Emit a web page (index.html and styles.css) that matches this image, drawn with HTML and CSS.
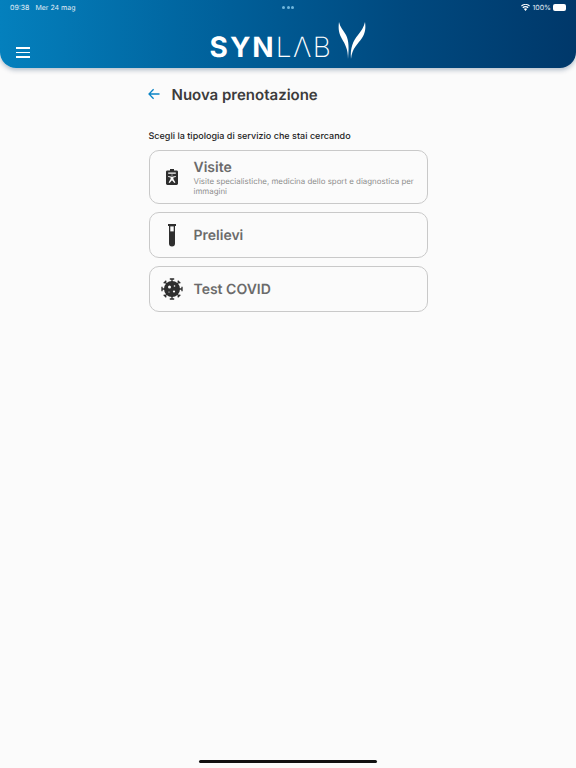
FILE: index.html
```html
<!DOCTYPE html>
<html lang="it">
<head>
  <meta charset="UTF-8" />
  <meta name="viewport" content="width=device-width, initial-scale=1.0"/>
  <title>Nuova prenotazione</title>
  <link rel="stylesheet" href="styles.css">
</head>
<body>
  <header class="topbar">
    <div class="status">
      <div class="status-left"><span>09:38</span><span>Mer 24 mag</span></div>
      <div class="status-dots"><i></i><i></i><i></i></div>
      <div class="status-right">
        <svg class="wifi" viewBox="0 0 12 9" width="9" height="7">
          <path d="M6 9 3.900 6.500a3 3 0 0 1 4.200 0zM3.100 5.600 1.800 4.100a6 6 0 0 1 8.400 0L8.900 5.600a4.200 4.200 0 0 0-5.800 0zM1 3.200 0 2a9 9 0 0 1 12 0l-1 1.200a7.500 7.500 0 0 0-10 0z" fill="#fff"/>
        </svg>
        <span>100%</span>
        <span class="battery"></span>
      </div>
    </div>
    <div class="brand-row">
      <button class="menu" aria-label="Menu"><i></i><i></i><i></i></button>
      <div class="logo">
        <span class="logo-syn">SYN</span><span class="logo-lab">LΛB</span>
        <svg class="horns" viewBox="0 0 28 37" width="28" height="37">
          <path d="M1 0C0 7 1 12 4 17c3 5 6 10 6 20C11 26 11 19 8 13 5 8 2 5 1 0z" fill="#fff"/>
          <path d="M27 0c1 7 0 11-3 16-4 6-10 10-11 21-1-11 2-18 7-24 3-4 6-8 7-13z" fill="#fff"/>
        </svg>
      </div>
    </div>
  </header>

  <main class="content">
    <div class="title-row">
      <svg class="back" viewBox="0 0 12 12" width="12" height="12">
        <path d="M11.500 6H1M5.600 1.200 1 6l4.600 4.800" fill="none" stroke="#0a84c6" stroke-width="1.300"/>
      </svg>
      <h1>Nuova prenotazione</h1>
    </div>

    <p class="lead">Scegli la tipologia di servizio che stai cercando</p>

    <div class="cards">
      <a class="card card-tall">
        <span class="card-icon">
          <svg viewBox="0 0 12 16" width="12" height="16">
            <path fill-rule="evenodd" fill="#2e2e2e" d="M4 0h4v1.400h2.600c.8 0 1.400.6 1.400 1.400v11.800c0 .8-.6 1.400-1.400 1.400H1.400c-.8 0-1.400-.6-1.400-1.400V2.800c0-.8.6-1.400 1.400-1.400H4zM2.200 3.600v1.200h7.600V3.600zM5 5.800a1.100 1.100 0 0 0 2 0zM2.200 6.900v1l2.400.7v1.500l-2 3.400 1 .5L6 11.200l2.400 2.800 1-.5-2-3.400V8.600l2.400-.7v-1L6 7.700z"/>
          </svg>
        </span>
        <span class="card-text">
          <span class="card-title">Visite</span>
          <span class="card-desc">Visite specialistiche, medicina dello sport e diagnostica per immagini</span>
        </span>
      </a>
      <a class="card">
        <span class="card-icon">
          <svg viewBox="0 0 8 23" width="8" height="23">
            <path fill="#2e2e2e" d="M0 0h8v2H7v17.500a3 3 0 0 1-6 0V2H0z"/>
            <rect x="2.300" y="2.400" width="3.400" height="5" fill="#fbfbfb"/>
          </svg>
        </span>
        <span class="card-text"><span class="card-title">Prelievi</span></span>
      </a>
      <a class="card">
        <span class="card-icon">
          <svg viewBox="0 0 22 22" width="22" height="22">
            <circle cx="11" cy="11" r="8" fill="#2e2e2e"/>
            <g stroke="#2e2e2e" stroke-width="1.300">
              <path d="M11 1V4M8.800 1h4.400"/>
              <path d="M11 18v3M8.800 21h4.400"/>
              <path d="M1 11H4M1 8.800v4.400"/>
              <path d="M18 11h3M21 8.800v4.400"/>
              <path d="M4 4l2.200 2.200M2.700 5.300l2.600-2.600"/>
              <path d="M18 4l-2.200 2.200M19.300 5.300l-2.600-2.600"/>
              <path d="M4 18l2.200-2.200M2.700 16.700l2.600 2.600"/>
              <path d="M18 18l-2.200-2.200M19.300 16.700l-2.600 2.600"/>
            </g>
            <circle cx="8.500" cy="9" r="1.500" fill="#fbfbfb"/>
            <circle cx="13.500" cy="8" r=".8" fill="#fbfbfb"/>
            <circle cx="13" cy="13.500" r="1.100" fill="#fbfbfb"/>
            <circle cx="8" cy="14" r=".6" fill="#fbfbfb"/>
          </svg>
        </span>
        <span class="card-text"><span class="card-title">Test COVID</span></span>
      </a>
    </div>
  </main>

  <div class="home-bar"></div>
</body>
</html>
```

FILE: styles.css
```css
* {
  box-sizing: border-box;
}

html, body {
  height: 100%;
}

body {
  display: flex;
  flex-direction: column;
  margin: 0;
  background: #fbfbfb;
  font-family: Inter, 'Noto Sans', sans-serif;
  text-rendering: geometricPrecision;
  color: #2e2e2e;
  overflow: hidden;
}

.topbar {
  height: 68px;
  flex: none;
  padding: 0 10px;
  color: #fff;
  background: linear-gradient(90deg, #0480bd 0%, #005f99 40%, #00497f 70%, #00386a 100%);
  border-radius: 0 0 16px 16px;
  box-shadow: 0 2px 5px rgba(0, 40, 80, 0.3);
}

.status {
  display: grid;
  grid-template-columns: 1fr auto 1fr;
  align-items: center;
  height: 14px;
  font-size: 7px;
  color: #e2eef6;
}

.status-left {
  display: flex;
  gap: 6px;
}

.status-dots {
  display: flex;
  gap: 1.500px;
}

.status-dots i {
  width: 3px;
  height: 3px;
  border-radius: 50%;
  background: #6fb6dc;
}

.status-right {
  display: flex;
  justify-content: flex-end;
  align-items: center;
  gap: 2px;
}

.battery {
  display: block;
  width: 13px;
  height: 7px;
  border-radius: 2px;
  background: #fff;
}

.brand-row {
  position: relative;
  display: flex;
  justify-content: center;
  height: 54px;
}

.menu {
  position: absolute;
  left: 6px;
  top: 33px;
  display: flex;
  flex-direction: column;
  gap: 3px;
  width: 14px;
  padding: 0;
  border: none;
  background: none;
}

.menu i {
  display: block;
  height: 1.500px;
  width: 14px;
  background: #fff;
}

.logo {
  display: flex;
  align-items: flex-end;
  height: 45px;
  color: #fff;
  line-height: 24px;
}

.logo-syn {
  font-size: 28px;
  font-weight: 700;
  letter-spacing: 2px;
}

.logo-lab {
  font-size: 28px;
  font-weight: 200;
  letter-spacing: 1.500px;
  margin-right: 6px;
}

.horns {
  display: block;
}

.content {
  width: 279px;
  margin: 0 auto;
}

.title-row {
  display: flex;
  align-items: center;
  gap: 12px;
  height: 20px;
  margin-top: 16px;
  margin-left: -1px;
}

.title-row h1 {
  margin: 0;
  font-size: 15px;
  font-weight: 600;
  color: #3c3c3c;
}

.lead {
  margin: 26px 0 0;
  font-size: 9px;
  line-height: 14px;
  font-weight: 500;
  letter-spacing: 0.02px;
  color: #222;
}

.cards {
  display: flex;
  flex-direction: column;
  gap: 8px;
  margin-top: 6px;
}

.card {
  display: flex;
  align-items: center;
  min-height: 46px;
  border: 1px solid #c9c9c9;
  border-radius: 10px;
}

.card-tall {
  height: 54px;
}

.card-icon {
  display: flex;
  justify-content: center;
  flex: none;
  width: 44px;
}

.card-text {
  display: flex;
  flex-direction: column;
  padding: 2px 10px 0 0;
}

.card-title {
  font-size: 14px;
  line-height: 16px;
  font-weight: 600;
  color: #6b6b6b;
}

.card-desc {
  font-size: 7.900px;
  line-height: 10px;
  color: #8e8e8e;
}

.home-bar {
  width: 178px;
  height: 3px;
  margin: auto auto 5px;
  border-radius: 2px;
  background: #111;
}
```
